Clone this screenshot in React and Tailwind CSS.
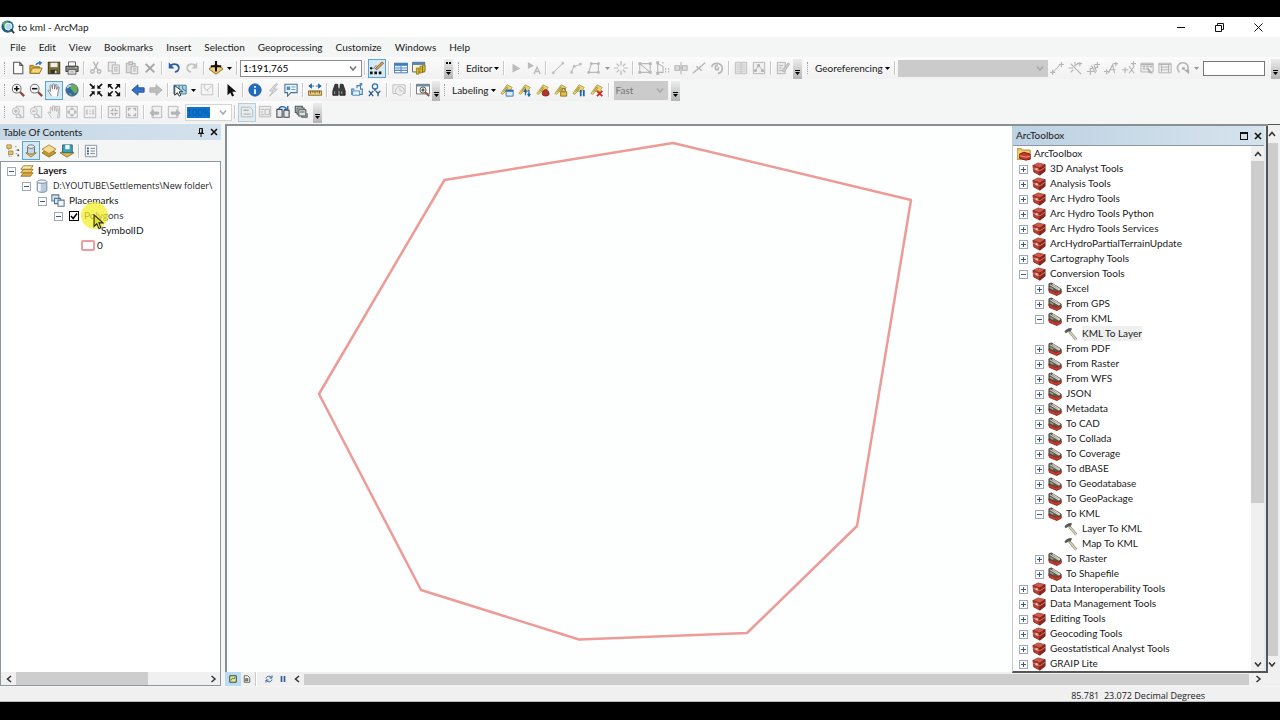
import React, { useState } from 'react';
import clsx from 'clsx';

const menus = ['File', 'Edit', 'View', 'Bookmarks', 'Insert', 'Selection', 'Geoprocessing', 'Customize', 'Windows', 'Help'];

const tools = [
  { name: '3D Analyst Tools', level: 1 },
  { name: 'Analysis Tools', level: 1 },
  { name: 'Arc Hydro Tools', level: 1 },
  { name: 'Arc Hydro Tools Python', level: 1 },
  { name: 'Arc Hydro Tools Services', level: 1 },
  { name: 'ArcHydroPartialTerrainUpdate', level: 1 },
  { name: 'Cartography Tools', level: 1 },
  { name: 'Conversion Tools', level: 1, open: true },
  { name: 'Excel', level: 2 },
  { name: 'From GPS', level: 2 },
  { name: 'From KML', level: 2, open: true },
  { name: 'KML To Layer', level: 3 },
  { name: 'From PDF', level: 2 },
  { name: 'From Raster', level: 2 },
  { name: 'From WFS', level: 2 },
  { name: 'JSON', level: 2 },
  { name: 'Metadata', level: 2 },
  { name: 'To CAD', level: 2 },
  { name: 'To Collada', level: 2 },
  { name: 'To Coverage', level: 2 },
  { name: 'To dBASE', level: 2 },
  { name: 'To Geodatabase', level: 2 },
  { name: 'To GeoPackage', level: 2 },
  { name: 'To KML', level: 2, open: true },
  { name: 'Layer To KML', level: 3 },
  { name: 'Map To KML', level: 3 },
  { name: 'To Raster', level: 2 },
  { name: 'To Shapefile', level: 2 },
  { name: 'Data Interoperability Tools', level: 1 },
  { name: 'Data Management Tools', level: 1 },
  { name: 'Editing Tools', level: 1 },
  { name: 'Geocoding Tools', level: 1 },
  { name: 'Geostatistical Analyst Tools', level: 1 },
  { name: 'GRAIP Lite', level: 1 },
];

// shared parts of the label icons
const tag = (
  <>
    <path d="M1 12L8 2l6 3-4 6-3-2-4 4z" fill="#e9d46a" stroke="#a8923a" strokeWidth=".8" />
    <path d="M4 10l4-6M6 10l3-5" stroke="#8a7a3c" strokeWidth=".8" />
  </>
);
const hand = 'M5 15C4 12 2 10.500 1 8.500c1-1 2 0 3 1.200L3.500 3c.8-1 1.700-.5 2 .4L6.300 7 6.500 1.500c1-.9 1.800-.3 2 .6L8.700 7l1-5c1-.6 1.800 0 1.700 1L11 7.500l1.500-3c1.200-.3 1.500.4 1.300 1.200L12.500 11 12 15';

const icons = {
  new: <path d="M3 1.500h7l3.500 3.500v9.500H3zM10 1.500V5h3.500" fill="#fff" stroke="#555" strokeWidth="1.200" />,
  open: (
    <>
      <path d="M1 14V5h4l1 1.500h6V14z" fill="#d9a52e" stroke="#8d6b1f" />
      <path d="M1 14l3-6h11l-3 6z" fill="#f7d774" stroke="#8d6b1f" />
      <path d="M8 4.500c1-2.500 3-2.500 4.500-2.500M11.500.5L14 2l-2 2.500" fill="none" stroke="#2b78c5" strokeWidth="1.500" />
    </>
  ),
  save: (
    <>
      <path d="M1.500 1.500h13v13h-13z" fill="#7a7030" stroke="#3f3a18" strokeWidth="1.200" />
      <path d="M4 2h8v5H4z" fill="#eee" />
      <path d="M4 10h8v4.500H4z" fill="#333" />
      <path d="M9 11h2v3H9z" fill="#ddd" />
    </>
  ),
  print: (
    <>
      <path d="M4 1h8v5H4z" fill="#fff" stroke="#555" />
      <path d="M1 6h14v6H1z" fill="#888" stroke="#333" />
      <path d="M3.500 10h9v5h-9z" fill="#fff" stroke="#444" />
      <path d="M5 12.500h6" stroke="#777" />
      <path d="M11.500 7.500h2" stroke="#dfe36a" />
    </>
  ),
  cut: (
    <g fill="none" stroke="#b4b4b4" strokeWidth="1.500">
      <path d="M5 1l5 9M10.500 1L6 10" />
      <circle cx="4" cy="12" r="2" />
      <circle cx="11.500" cy="12" r="2" />
    </g>
  ),
  copy: (
    <g fill="#eee" stroke="#b4b4b4" strokeWidth="1.200">
      <path d="M1.500 1.500h8v10h-8z" />
      <path d="M6 4.500h8v10H6z" />
      <path d="M8 7.500h4M8 9.500h4M8 11.500h4" />
    </g>
  ),
  paste: (
    <g fill="#ddd" stroke="#b4b4b4" strokeWidth="1.200">
      <path d="M1.500 2.500h10v11h-10z" />
      <path d="M4.500 1h4v3h-4z" />
      <path d="M7 6.500h7.500v8H7z" fill="#f2f2f2" />
      <path d="M9 9h4M9 11.500h4" />
    </g>
  ),
  del: <path d="M3 3.500l10 9.500M13 3.500L3 13" stroke="#a6a6a6" strokeWidth="2.200" />,
  undo: (
    <>
      <path d="M4 5c6-3.500 10 0 9.500 3.500C13 11 11 12.500 9 12.500" fill="none" stroke="#2d5fa8" strokeWidth="2" />
      <path d="M2 1.500v7h6.500z" fill="#2d5fa8" />
    </>
  ),
  redo: (
    <>
      <path d="M12 5C6 1.500 2 5 2.500 8.500 3 11 5 12.500 7 12.500" fill="none" stroke="#c4c4c4" strokeWidth="2" />
      <path d="M14 1.500v7H7.500z" fill="#c4c4c4" />
    </>
  ),
  add: (
    <>
      <path d="M0 9l8-5.500L16 9l-8 6z" fill="#f0d27c" stroke="#a57b2a" strokeWidth="1.200" />
      <path d="M8 0v12M2 6h12" stroke="#111" strokeWidth="2.400" />
    </>
  ),
  sketch: (
    <>
      <path d="M1 9l4-1 2-3 3 3" fill="none" stroke="#777" />
      <path d="M6 9l7.500-8 2 1.500L8 10z" fill="#e3a04c" stroke="#6d4a1d" strokeWidth=".8" />
      <path d="M0 12h3v3H0zM5 12h3v3H5zM10 12h3v3h-3zM0 7h2.500v2.500H0z" fill="#111" />
    </>
  ),
  table: (
    <>
      <path d="M.5 2.500h15v11H.5z" fill="#fff" stroke="#3c6799" />
      <path d="M.5 2.500h15v3H.5z" fill="#3d7cc0" />
      <path d="M1 8h14M1 10.700h14M8 5v8" stroke="#4f88c4" strokeWidth="1.200" />
      <path d="M2 6.500h5v3H2z" fill="#8fc3ea" />
    </>
  ),
  catalog: (
    <>
      <path d="M.5 1.500h14v11H.5z" fill="#f8f4d4" stroke="#555" />
      <path d="M.5 1.500h14v3H.5z" fill="#5584b8" />
      <path d="M5 15V8h3v7zM9 14V6h3v7zM12 13V5h3v6z" fill="#d8b91f" stroke="#80701a" strokeWidth=".8" />
    </>
  ),
  play: <path d="M4 3l9 5.500L4 13z" fill="#bbb" />,
  playA: (
    <>
      <path d="M1 1l7 4.500L1 9z" fill="#bbb" />
      <path d="M8 15l3.500-8L15 15M9.500 12h4" fill="none" stroke="#bbb" strokeWidth="1.500" />
    </>
  ),
  line: (
    <g stroke="#c0c0c0" fill="#c0c0c0">
      <path d="M2 14L14 2" strokeWidth="1.200" />
      <path d="M1.500 12.500h2v2h-2zM12.500 1.500h2v2h-2z" />
    </g>
  ),
  arc: (
    <g stroke="#c0c0c0">
      <path d="M3 14c0-6 3-9 10-10" fill="none" strokeWidth="1.200" />
      <path d="M2 12h2v2H2zM5 5h2v2H5zM12 2.500h2v2h-2z" fill="#c0c0c0" />
    </g>
  ),
  trace: (
    <g stroke="#b8b8b8" fill="#b8b8b8">
      <path d="M2 13L5 3h8v10H2" fill="none" strokeWidth="1.200" />
      <path d="M4 2h2v2H4zM12 2h2v2h-2zM12 12h2v2h-2zM1 12h2v2H1z" />
    </g>
  ),
  burst: <path d="M8 0v5M8 11v5M0 8h5M11 8h5M3 3l3 3M10 10l3 3M13 3l-3 3M6 10l-3 3" stroke="#bbb" strokeWidth="1.400" />,
  reshape: (
    <g stroke="#b8b8b8" fill="none" strokeWidth="1.200">
      <path d="M2 13V3l12 10zM2 3h12v10" />
      <path d="M1 2h2v2H1zM13 2h2v2h-2zM1 12h2v2H1zM13 12h2v2h-2z" fill="#b8b8b8" />
    </g>
  ),
  cutpoly: (
    <g stroke="#b4b4b4" fill="none" strokeWidth="1.200">
      <path d="M2 2v12M2 3l6 3v7H2" />
      <path d="M11 8v6M14.500 8v6M8 1v3" strokeDasharray="2 1" />
      <path d="M1 1h2v2H1zM1 13h2v2H1z" fill="#b4b4b4" />
    </g>
  ),
  split: (
    <g stroke="#b4b4b4" strokeWidth="1.200">
      <path d="M1 5.500h5.500v5H1zM9.500 5.500H15v5H9.500z" fill="#ddd" />
      <path d="M6 8h4M8 1v14" />
    </g>
  ),
  slice: <path d="M1 14L15 2M5 6l6 5" stroke="#b4b4b4" strokeWidth="1.500" />,
  rotate: <path d="M2 7c1-6 11-6 12 1 0 4-2 6-5 6M9 5c-4 0-4 6 0 5l1-3" fill="none" stroke="#b8b8b8" strokeWidth="2" />,
  attrs: (
    <g stroke="#bcbcbc" fill="#e2e2e2">
      <path d="M1.500 1.500h13v13h-13z" />
      <path d="M3 4.500h4M3 7h4M3 9.500h4M3 12h4M9 4.500h4M9 7h4M9 9.500h4M9 12h4" stroke="#cfcfcf" />
      <path d="M8 2v12" />
    </g>
  ),
  sketchProps: (
    <g stroke="#b0b0b0" fill="#efefef">
      <path d="M1.500 1.500h13v13h-13z" />
      <path d="M4 11l3.500-6 4.500 6" fill="none" />
      <path d="M3 10h2v2H3zM6.500 4h2v2h-2zM11 10h2v2h-2z" fill="#b0b0b0" />
    </g>
  ),
  create: (
    <g stroke="#b0b0b0" fill="#eaeaea">
      <path d="M1.500 1.500h9v13h-9z" />
      <path d="M3 5h5M3 8h4M3 11h5" />
      <path d="M7 11l7-9 1.500 1.500-6 9z" fill="#ccc" />
    </g>
  ),
  linkPts: <path d="M2 14L14 2M0 13h6M3 10v6M10 4h6M13 1v6" stroke="#b8b8b8" strokeWidth="1.200" />,
  autoReg: <path d="M5 5l10 10M8 1v5M1 8h5M3 3l3 3M12 2L9 5M3 13l3-3M11 3h5M13.500 1v5" stroke="#b4b4b4" strokeWidth="1.300" />,
  linkHash: <path d="M1 12h8M5 8v8M6 5l5 9M4 9l10-2M9 4l3 8M10 4h6M13 1v6" stroke="#b4b4b4" strokeWidth="1.300" fill="none" />,
  linkA: <path d="M0 12h6M3 9v6M5 14l5-10 2 10M6 10h7M11 3h5M13.500 1v5" stroke="#b4b4b4" strokeWidth="1.300" fill="none" />,
  linkX: <path d="M0 10h7M3.500 7v7M8 6l6 8M14 6l-6 8M10 3h6M13 0v6" stroke="#b4b4b4" strokeWidth="1.300" fill="none" />,
  linkTable: (
    <g stroke="#b0b0b0" fill="#eee">
      <path d="M1 2.500h14v10H1z" />
      <path d="M1 4h14M3 6.500h3M7 6.500h3M11 6.500h3M3 9h3M7 9h2" strokeWidth="1.500" />
      <path d="M9 8l5 6-4-1z" fill="#b0b0b0" />
    </g>
  ),
  linkGrid: (
    <g stroke="#b0b0b0" fill="#eee">
      <path d="M1 2.500h14v11H1z" />
      <path d="M1 4h14M4 4v9M12 4v9M3 7h10M3 10h10" />
    </g>
  ),
  spin: (
    <>
      <path d="M4 13C-1 8 3 1.500 8 2c5 0 7 5 5 9" fill="none" stroke="#b4b4b4" strokeWidth="1.800" />
      <path d="M7 7h3v3H7zM9 10h6v5z" fill="#aaa" />
    </>
  ),
  zoomIn: (
    <>
      <path d="M10 10l5 5" stroke="#8a4a3c" strokeWidth="2.600" />
      <circle cx="6.500" cy="6.500" r="5" fill="#f4f8fb" stroke="#777" strokeWidth="1.200" />
      <path d="M3.500 6.500h6M6.500 3.500v6" stroke="#111" strokeWidth="1.800" />
    </>
  ),
  zoomOut: (
    <>
      <path d="M10 10l5 5" stroke="#8a4a3c" strokeWidth="2.600" />
      <circle cx="6.500" cy="6.500" r="5" fill="#f4f8fb" stroke="#777" strokeWidth="1.200" />
      <path d="M3.500 6.500h6" stroke="#111" strokeWidth="1.800" />
    </>
  ),
  pan: <path d={hand} fill="#fff" stroke="#777" strokeWidth="1" />,
  globe: (
    <>
      <circle cx="8" cy="8" r="7" fill="#2f68ad" stroke="#4f6880" />
      <path d="M7 2c3-1 6 1 7 3v5l-3 2-3-4-2-2zM4 11l3 1 1 2H6z" fill="#6fae4c" />
      <path d="M3 6c0-2 2-3 4-3" fill="none" stroke="#a9d5ee" strokeWidth="1.800" />
    </>
  ),
  zoomFixedIn: (
    <>
      <path d="M1 1l4 4M15 1l-4 4M1 15l4-4M15 15l-4-4" stroke="#111" strokeWidth="1.700" />
      <path d="M6.500 2v4.500H2zM9.500 2v4.500H14zM6.500 14V9.500H2zM9.500 14V9.500H14z" fill="#111" />
    </>
  ),
  zoomFixedOut: (
    <>
      <path d="M3 3l3.500 3.500M13 3L9.500 6.500M3 13l3.500-3.500M13 13L9.500 9.500" stroke="#111" strokeWidth="1.700" />
      <path d="M1 6V1h5zM15 6V1h-5zM1 10v5h5zM15 10v5h-5z" fill="#111" />
    </>
  ),
  back: <path d="M1 8l7-6v3.500h7v5H8V14z" fill="#3272c8" stroke="#1e4d92" />,
  forward: <path d="M15 8L8 2v3.500H1v5h7V14z" fill="#bdbdbd" stroke="#adadad" />,
  select: (
    <>
      <path d="M1 2.500h14v10H1z" fill="#a5dcec" stroke="#3d6d88" />
      <path d="M7 3v9M11 3v4l4 2" stroke="#3d6d88" fill="none" />
      <path d="M2 3v11l3-3 2 4 2-1-2-4h4z" fill="#fff" stroke="#222" />
    </>
  ),
  clear: (
    <g stroke="#c0c0c0" fill="#f4f4f4">
      <path d="M1.500 1.500h13v12h-13z" />
      <path d="M5 2v4l5 4M14 3l-6 5" />
    </g>
  ),
  arrow: <path d="M4 1v13l3.200-3 2 4.500 2.300-1-2-4.500H14z" fill="#111" />,
  info: (
    <>
      <circle cx="8" cy="8" r="7" fill="#1f6dc0" stroke="#184f8c" />
      <path d="M7 7h2v5.500H7zM7 3.500h2v2H7z" fill="#fff" />
    </>
  ),
  bolt: <path d="M11 1L4 9h4l-4 6 9-8H9l4-6z" fill="#ddd" stroke="#b8b8b8" />,
  popup: (
    <>
      <path d="M1 1.500h14v9.500H8L4 15v-4H1z" fill="#eef6fb" stroke="#4b6f8f" strokeWidth="1.200" />
      <path d="M3 4h4v4H3z" fill="#4f8fc4" />
      <path d="M8.500 4.500H13M8.500 7.500H13" stroke="#4f8fc4" />
    </>
  ),
  measure: (
    <>
      <path d="M1 3.500h14M1 3.500l3-2.500v5zM15 3.500L12 1v5z" stroke="#2a6ab0" fill="#2a6ab0" />
      <path d="M7 1h2v5H7z" fill="#f5f5f5" />
      <path d="M.5 9h15v5H.5z" fill="#f0cf7a" stroke="#7d6228" />
      <path d="M3 9v3M5.500 9v2M8 9v3M10.500 9v2M13 9v3" stroke="#5a451a" />
    </>
  ),
  find: (
    <>
      <path d="M3.500 1.500h3l.5 6V14H1V9zM9.500 1.500h3L15 9v5H9V7.500z" fill="#3c3c3c" stroke="#222" />
      <path d="M6 6h4v3H6z" fill="#444" />
      <path d="M3 9.500v3M11 9.500v3" stroke="#aaa" />
    </>
  ),
  route: (
    <>
      <path d="M4 13H2V7h3M8 6V3h4v4h2v6H9" fill="none" stroke="#3e7fb6" strokeWidth="1.300" />
      <path d="M3 9h8v5H3z" fill="#e8f2f9" stroke="#3e7fb6" />
      <path d="M11 0h3v3h-3z" fill="#5c8aae" />
    </>
  ),
  xy: (
    <>
      <circle cx="8" cy="4" r="3" fill="none" stroke="#2f76b5" strokeWidth="1.500" />
      <path d="M8 6v3M1 9l5 6M6 9l-5 6M9 9l2.500 3L14 9M11.500 12v3" stroke="#2f5f94" strokeWidth="1.600" fill="none" />
    </>
  ),
  time: (
    <g stroke="#bcbcbc" fill="#eee">
      <path d="M1 2h14v10H1z" />
      <circle cx="9" cy="9" r="5" />
      <path d="M9 6v3h3" fill="none" />
    </g>
  ),
  viewer: (
    <>
      <path d="M.5 1.500h15v11H.5z" fill="#fff" stroke="#666" />
      <path d="M.5 1.500h15v2.500H.5z" fill="#6f8aa5" />
      <circle cx="8" cy="8" r="3.500" fill="#fff" stroke="#444" />
      <path d="M10.500 10.500L15 15" stroke="#8a4a3c" strokeWidth="2" />
      <path d="M6 8h4M8 6v4" stroke="#111" />
    </>
  ),
  labelMgr: (
    <>
      {tag}
      <path d="M7 8h8v7H7z" fill="#d9ecfb" stroke="#2a6bb0" />
      <path d="M7 8h8v2H7z" fill="#2a6bb0" />
    </>
  ),
  labelPri: (
    <>
      {tag}
      <path d="M8.500 14V8M7 10l1.500-2.500L10 10M12.500 8v6M11 12.500l1.500 2.500 1.500-2.500" fill="none" stroke="#1d62b5" strokeWidth="1.400" />
    </>
  ),
  labelWeight: (
    <>
      {tag}
      <path d="M8 9.500C9 7 13 7 14 9.500l1 3c0 3-8 3-8 0z" fill="#b3352a" stroke="#761d16" />
    </>
  ),
  labelLock: (
    <>
      {tag}
      <path d="M9 10V8c0-2.500 4-2.500 4 0v2" fill="none" stroke="#8c7532" strokeWidth="1.300" />
      <path d="M7.500 10h7v5h-7z" fill="#e6bb42" stroke="#8c6e1c" />
    </>
  ),
  labelPause: (
    <>
      {tag}
      <path d="M10 8v7M13.500 8v7" stroke="#1d62b5" strokeWidth="2" />
    </>
  ),
  labelUn: (
    <>
      {tag}
      <path d="M8 9l6 6M14 9l-6 6" stroke="#d22a20" strokeWidth="2.200" />
    </>
  ),
  pgZoomIn: (
    <g stroke="#b8b8b8" fill="#efefef">
      <path d="M6 1.500h8.500v13H6z" />
      <circle cx="5.500" cy="7" r="4" />
      <path d="M8.500 10l4 4M3.500 7h4M5.500 5v4" strokeWidth="1.400" />
    </g>
  ),
  pgZoomOut: (
    <g stroke="#b8b8b8" fill="#efefef">
      <path d="M6 1.500h8.500v13H6z" />
      <circle cx="5.500" cy="7" r="4" />
      <path d="M8.500 10l4 4M3.500 7h4" strokeWidth="1.400" />
    </g>
  ),
  pgPan: (
    <g stroke="#b8b8b8" fill="#efefef">
      <path d="M6 1.500h8.500v13H6z" />
      <path d={hand} />
    </g>
  ),
  pgFull: (
    <g stroke="#b4b4b4" fill="#f1f1f1">
      <path d="M2 1.500h12v13H2z" />
      <path d="M8 3L6 5h4zM8 13l-2-2h4zM3 8l2-2v4zM13 8l-2-2v4z" fill="#b4b4b4" />
    </g>
  ),
  pgOne: (
    <g stroke="#b4b4b4" fill="#f1f1f1">
      <path d="M1.500 1.500h13v13h-13z" />
      <path d="M4.500 5v6M11.500 5v6M8 6v1.500M8 9v1.500" strokeWidth="1.400" />
    </g>
  ),
  pgIn: (
    <g stroke="#b0b0b0" fill="#f1f1f1">
      <path d="M1.500 1.500h13v13h-13z" />
      <path d="M4 6.500h2.500V4M12 6.500H9.500V4M4 9.500h2.500V12M12 9.500H9.500V12" fill="none" strokeWidth="1.500" />
    </g>
  ),
  pgOut: (
    <g stroke="#b0b0b0" fill="#f1f1f1">
      <path d="M1.500 1.500h13v13h-13z" />
      <path d="M4 6.500V4h2.500M12 6.500V4H9.500M4 9.500V12h2.500M12 9.500V12H9.500" fill="none" strokeWidth="1.500" />
    </g>
  ),
  pgBack: (
    <g stroke="#b4b4b4" fill="#f1f1f1">
      <path d="M3.500 1.500h11v13h-11z" />
      <path d="M1 9l4-3.500V8h6v2.500H5V13z" fill="#b4b4b4" />
    </g>
  ),
  pgNext: (
    <g stroke="#b4b4b4" fill="#f1f1f1">
      <path d="M1.500 1.500h11v13h-11z" />
      <path d="M15 9l-4-3.500V8H5v2.500h6V13z" fill="#b4b4b4" />
    </g>
  ),
  draft: (
    <g stroke="#b4b4b4" fill="#e9eef0">
      <path d="M1.500 2.500h10l3 3v8h-13z" />
      <path d="M4 6h6M4 10.500h8" strokeWidth="1.500" />
    </g>
  ),
  focus: (
    <g stroke="#b4b4b4" fill="#eee">
      <path d="M1.500 1.500h13v12h-13z" />
      <path d="M3 5h4M3 8h3M3 11h4M8 5h5v6H8z" />
    </g>
  ),
  swap: (
    <>
      <path d="M1 5h6v9H1zM9 6h6v8H9z" fill="#dfe9ee" stroke="#444" strokeWidth="1.200" />
      <path d="M3 5c1-4 6-4 9-1M13.500 1v4h-4" fill="none" stroke="#2465a8" strokeWidth="1.600" />
    </>
  ),
  pages: (
    <g stroke="#4a5358" strokeWidth="1.200" fill="#dfe6e2">
      <path d="M1.500 1.500h8v7h-8z" />
      <path d="M3.500 3.500h8v7h-8z" />
      <path d="M5.500 5.500h8v7h-8z" />
      <path d="M7 8h5M9 12v2h6v-4h-1" fill="none" />
    </g>
  ),
  listDraw: (
    <>
      <path d="M1 1h5v4H1zM3 8h5v4H3z" fill="#e8c46b" stroke="#a98734" />
      <path d="M3 5v9h4M10 3h2M11 7h2M11 11h2" fill="none" stroke="#999" strokeDasharray="2 1" />
      <path d="M13 6h2v2h-2zM13 12h2v2h-2z" fill="#555" />
    </>
  ),
  listSource: (
    <>
      <path d="M2 10h12l-6 5z" fill="#ecc45e" stroke="#9d7828" />
      <path d="M4 3v7c0 2 8 2 8 0V3" fill="#c9d3de" stroke="#5d6b7c" />
      <ellipse cx="8" cy="3" rx="4" ry="2" fill="#eef2f6" stroke="#5d6b7c" />
    </>
  ),
  listVis: (
    <>
      <path d="M0 10l8-5 8 5-8 5z" fill="#c9962d" stroke="#8d6b25" />
      <path d="M0 6l8-5 8 5-8 5z" fill="#f5dc93" stroke="#a57f2d" />
    </>
  ),
  listSel: (
    <>
      <path d="M0 10l8-3 8 3-8 5z" fill="#e7b94d" stroke="#8d6b25" />
      <path d="M3 1h11v9H3z" fill="#39a2b8" stroke="#225e73" />
      <path d="M6 1h5v5H6z" fill="#e9f5f7" />
    </>
  ),
  options: (
    <>
      <path d="M1.500 1.500h13v13h-13z" fill="#f5f8fa" stroke="#7f8d99" />
      <path d="M3.500 4h2v2h-2zM3.500 7h2v2h-2zM3.500 10h2v2h-2z" fill="#40576b" />
      <path d="M7.500 5h5M7.500 8h5M7.500 11h5" stroke="#68788a" />
    </>
  ),
  layers: (
    <g stroke="#8f6a1e" strokeWidth=".9">
      <path d="M1 14l3-4h11l-3 4z" fill="#dfab3d" />
      <path d="M1 10l3-4h11l-3 4z" fill="#edc765" />
      <path d="M1 6l3-4h11l-3 4z" fill="#f9e7ad" />
    </g>
  ),
  database: (
    <>
      <path d="M2.500 3v10c0 3 11 3 11 0V3" fill="#b9cbe0" stroke="#6d7f95" />
      <path d="M5 5v9" stroke="#f5f9fc" strokeWidth="3" />
      <ellipse cx="8" cy="3" rx="5.500" ry="2" fill="#eef3f8" stroke="#6d7f95" />
    </>
  ),
  group: (
    <g stroke="#5a7690" fill="#dce6ee" strokeWidth="1.200">
      <path d="M1 1h8v7H1z" />
      <path d="M4 5h7v6H4z" />
      <path d="M8 7h7v7H8z" fill="#f3f7fa" />
    </g>
  ),
  toolboxRoot: (
    <>
      <path d="M0 14V2h5l1 1.500h9V14z" fill="#f0cf68" stroke="#a27d28" />
      <path d="M3 8l5-2 7 2v6l-5 1-7-2z" fill="#c13a2c" stroke="#6e1c15" />
      <path d="M3 10l7 1.500 5-1" stroke="#f0a79a" fill="none" />
    </>
  ),
  toolbox: (
    <>
      <path d="M1 4l6-3 8 2-6 4z" fill="#d4584a" stroke="#8a3026" strokeWidth=".8" />
      <path d="M1 4l8 3v8l-7-3.500z" fill="#bb3a2e" stroke="#7a2a20" strokeWidth=".8" />
      <path d="M9 7l6-4v7.500L9 15z" fill="#8f271e" stroke="#6b1912" strokeWidth=".8" />
      <path d="M1.500 7l7.500 3 6-4" fill="none" stroke="#e88f80" strokeWidth=".9" />
      <path d="M4 7h2.500v3L4 9z" fill="#f3cfc7" />
    </>
  ),
  toolset: (
    <>
      <path d="M1 2l3-1 11 7v4l-5 3-9-5z" fill="#5a5650" stroke="#3c3834" strokeWidth=".8" />
      <path d="M2 3l11 6.500M5 2.500l9 6" stroke="#d9d4c6" strokeWidth="1.300" />
      <path d="M1 8l8 4 6-2v3l-5 2.500L1.500 12z" fill="#c7392c" stroke="#7a2a20" strokeWidth=".8" />
      <path d="M2 6l4 2.500" stroke="#8fae88" strokeWidth="1.600" />
    </>
  ),
  hammer: (
    <>
      <path d="M6 5l8 9.500" stroke="#8b8872" strokeWidth="3" />
      <path d="M6 5l8 9.500" stroke="#dcd8c0" strokeWidth="1.600" />
      <path d="M.5 5.500C1.500 3 4 1 8.500 1l.5 1.500L7 5.500 5 5 2 7z" fill="#55575a" />
    </>
  ),
  dataView: (
    <>
      <path d="M1.500 1.500h13v13h-13z" fill="#e8e6a8" stroke="#3e4a2c" strokeWidth="2" />
      <path d="M4 11l3-5 3 2 2-4" fill="none" stroke="#4e8a4a" strokeWidth="2" />
    </>
  ),
  layoutView: (
    <>
      <path d="M2.500 1.500h7l4 4v9h-11z" fill="#fff" stroke="#444" strokeWidth="1.600" />
      <path d="M5 7h5v5H5z" fill="#7a9472" stroke="#444" />
    </>
  ),
  refresh: (
    <path d="M2 7c1-5 8-6 11-2M14 9c-1 5-8 6-11 2M14 1v5H9M2 15v-5h5" fill="none" stroke="#2f5f94" strokeWidth="2" />
  ),
  pause: <path d="M5 2v12M11 2v12" stroke="#2f5f94" strokeWidth="3.400" />,
};

function Icon({ name, className = 'size-3.5' }) {
  return (
    <svg viewBox="0 0 16 16" className={clsx('shrink-0', className)} aria-hidden="true">
      {icons[name]}
    </svg>
  );
}

function Chevron({ dir, className = 'size-2' }) {
  const d = { up: 'M1 6l3-3.500L7 6', down: 'M1 2.500L4 6l3-3.500', left: 'M6 1L2.500 4 6 7', right: 'M2.500 1L6 4 2.500 7' }[dir];
  return (
    <svg viewBox="0 0 8 8" className={clsx('shrink-0', className)} aria-hidden="true">
      <path d={d} fill="none" stroke="currentColor" strokeWidth="1.500" />
    </svg>
  );
}

function ToolButton({ name, active, dim }) {
  return (
    <button
      type="button"
      aria-label={name}
      className={clsx(
        'flex h-[19px] w-[18px] shrink-0 items-center justify-center',
        active && (dim ? 'border border-[#b9cdd9] bg-[#e3edf2]' : 'border border-[#5fa3d0] bg-[#d5e9f5]')
      )}
    >
      <Icon name={name} />
    </button>
  );
}

const Tools = ({ names }) => names.split(' ').map(n => <ToolButton key={n} name={n} />);

const Sep = () => <span className="mx-[2px] h-3.5 w-[2px] shrink-0 border-l border-[#c9c9c9] bg-white" />;

const Grip = () => <span className="mx-1 h-3 w-px shrink-0 border-l border-dotted border-[#a0a0a0]" />;

function DropArrow({ disabled }) {
  return (
    <button type="button" aria-label="More" className="flex h-4 w-[9px] shrink-0 items-center justify-center">
      <svg viewBox="0 0 5 3" className={clsx('h-[3px] w-[5px]', disabled ? 'fill-[#999]' : 'fill-black')}>
        <path d="M0 0h5L2.500 3z" />
      </svg>
    </button>
  );
}

function Overflow({ more }) {
  return (
    <button
      type="button"
      aria-label="Toolbar options"
      className="ml-auto flex h-5 w-[9px] shrink-0 flex-col items-center justify-end self-end bg-linear-to-b from-[#ededed] to-[#b4b4b4] pb-1"
    >
      {more && <span className="mb-1.5 h-[2px] w-[5px] border-x-2 border-black" />}
      <svg viewBox="0 0 5 5" className="size-[5px]">
        <path d="M0 0h5v1H0zM0 2h5L2.500 5z" />
      </svg>
    </button>
  );
}

function Toolbar({ className, children }) {
  return (
    <div role="toolbar" className={clsx('flex h-[22px] items-center bg-linear-to-b from-[#fbfbfb] to-[#f1f1f1]', className)}>
      {children}
    </div>
  );
}

function Combo({ label, value, disabled, className }) {
  return (
    <div
      className={clsx(
        'relative flex shrink-0 items-center text-[10px]',
        disabled ? 'bg-[#cbcbcb] text-[#777]' : 'border border-[#8c8c8c] bg-white text-black',
        className
      )}
    >
      <select aria-label={label} disabled={disabled} className="h-full w-full appearance-none pl-0.5 outline-none">
        <option>{value}</option>
      </select>
      <span className={clsx('pointer-events-none absolute right-1', disabled ? 'text-[#aaa]' : 'text-[#777]')}>
        <Chevron dir="down" />
      </span>
    </div>
  );
}

function Expander({ open }) {
  return (
    <button
      type="button"
      aria-label={open ? 'Collapse' : 'Expand'}
      className="mt-px flex size-[9px] shrink-0 items-center justify-center border border-[#a3a9b0] bg-white"
    >
      <svg viewBox="0 0 5 5" className="size-[5px]">
        <path d={open ? 'M0 2h5v1H0z' : 'M0 2h2V0h1v2h2v1H3v2H2V3H0z'} fill="#3d5a8c" />
      </svg>
    </button>
  );
}

function ScrollButton({ dir, className }) {
  return (
    <button type="button" aria-label={`Scroll ${dir}`} className={clsx('flex shrink-0 items-center justify-center text-[#333]', className)}>
      <Chevron dir={dir} />
    </button>
  );
}

function TitleBar() {
  return (
    <header className="flex h-5 shrink-0 items-center bg-white">
      <svg viewBox="0 0 16 16" className="ml-px size-3.5">
        <circle cx="7.500" cy="7.500" r="7" fill="#1f5f86" />
        <path d="M2 4c2-3 5-3 7-2L7 5 4 9z" fill="#5fa86a" />
        <circle cx="8.500" cy="7.500" r="3.800" fill="#a8dcec" stroke="#e8f3f6" strokeWidth="1.200" />
        <path d="M11 10.500l4 4.500" stroke="#333" strokeWidth="2" />
      </svg>
      <h1 className="ml-[3px] text-[10px]">to kml - ArcMap</h1>
      <div className="ml-auto flex pr-0.5">
        <button type="button" aria-label="Minimize" className="flex h-5 w-[39px] items-center justify-center">
          <span className="h-px w-2 bg-black" />
        </button>
        <button type="button" aria-label="Restore" className="flex h-5 w-[39px] items-center justify-center">
          <svg viewBox="0 0 9 9" className="size-[9px]" fill="none" stroke="#111">
            <path d="M.5 2.500h6v6h-6zM2.500 2.500v-2h6v6h-2" />
          </svg>
        </button>
        <button type="button" aria-label="Close" className="flex h-5 w-[39px] items-center justify-center">
          <svg viewBox="0 0 9 9" className="size-[9px]" fill="none" stroke="#111">
            <path d="M.5.5l8 8M8.500.5l-8 8" />
          </svg>
        </button>
      </div>
    </header>
  );
}

function Toolbars() {
  return (
    <div className="flex h-[67px] shrink-0 flex-col">
      <div className="flex">
        <Toolbar className="w-[453px]">
          <Grip />
          <Tools names="new open save print" />
          <Sep />
          <Tools names="cut copy paste del" />
          <Sep />
          <Tools names="undo redo" />
          <Sep />
          <ToolButton name="add" />
          <DropArrow />
          <Sep />
          <Combo label="Map scale" value="1:191,765" className="h-[17px] w-[122px]" />
          <Sep />
          <ToolButton name="sketch" active />
          <Sep />
          <Tools names="table catalog" />
          <Overflow more />
        </Toolbar>
        <Toolbar className="ml-px w-[348px]">
          <Grip />
          <button type="button" className="ml-[3px] text-[10px]">Editor</button>
          <DropArrow />
          <Sep />
          <Tools names="play playA" />
          <Sep />
          <Tools names="line arc trace" />
          <DropArrow disabled />
          <ToolButton name="burst" />
          <Sep />
          <Tools names="reshape cutpoly split slice rotate" />
          <Sep />
          <Tools names="attrs sketchProps" />
          <Sep />
          <ToolButton name="create" />
          <Overflow />
        </Toolbar>
        <Toolbar className="ml-px flex-1">
          <Grip />
          <button type="button" className="ml-[3px] text-[10px]">Georeferencing</button>
          <DropArrow />
          <Sep />
          <Combo label="Georeferencing layer" value="" disabled className="h-[17px] w-[150px]" />
          <Tools names="linkPts autoReg linkHash linkA linkX linkTable linkGrid spin" />
          <DropArrow disabled />
          <input aria-label="Rotation" className="ml-0.5 h-[15px] w-[62px] border border-[#777] bg-white px-1 text-[10px] outline-none" />
          <Overflow />
        </Toolbar>
      </div>
      <div className="flex">
        <Toolbar className="w-[440px]">
          <Grip />
          <Tools names="zoomIn zoomOut" />
          <ToolButton name="pan" active />
          <ToolButton name="globe" />
          <Sep />
          <Tools names="zoomFixedIn zoomFixedOut" />
          <Sep />
          <Tools names="back forward" />
          <Sep />
          <ToolButton name="select" />
          <DropArrow />
          <ToolButton name="clear" />
          <Sep />
          <ToolButton name="arrow" />
          <Sep />
          <Tools names="info bolt popup" />
          <Sep />
          <ToolButton name="measure" />
          <Sep />
          <Tools names="find route xy" />
          <Sep />
          <ToolButton name="time" />
          <Sep />
          <ToolButton name="viewer" />
          <Overflow />
        </Toolbar>
        <Toolbar className="w-[240px]">
          <Grip />
          <button type="button" className="ml-[3px] text-[10px]">Labeling</button>
          <DropArrow />
          <Tools names="labelMgr labelPri labelWeight labelLock labelPause labelUn" />
          <Sep />
          <Combo label="Label quality" value="Fast" disabled className="ml-0.5 h-[19px] w-[54px]" />
          <Overflow />
        </Toolbar>
      </div>
      <div className="flex">
        <Toolbar className="w-[322px]">
          <Grip />
          <Tools names="pgZoomIn pgZoomOut pgPan pgFull pgOne" />
          <Sep />
          <Tools names="pgIn pgOut" />
          <Sep />
          <Tools names="pgBack pgNext" />
          <div className="ml-0.5 flex h-[17px] w-[47px] items-center border border-[#d5d5d5] bg-white">
            <input
              aria-label="Page zoom"
              defaultValue="100%"
              className="ml-px h-[11px] w-[23px] bg-[#0c74cf] text-[9px] leading-none text-[#0a5aa6] outline-none"
            />
            <button type="button" aria-label="Zoom levels" className="ml-auto mr-1 text-[#aaa]">
              <Chevron dir="down" />
            </button>
          </div>
          <Sep />
          <ToolButton name="draft" active dim />
          <Tools names="focus swap pages" />
          <Overflow />
        </Toolbar>
      </div>
    </div>
  );
}

function Contents() {
  const [visible, setVisible] = useState(true);

  return (
    <aside className="flex w-[221px] shrink-0 flex-col">
      <div className="flex h-4 shrink-0 items-center bg-linear-to-r from-[#c6d8e6] to-[#d3e1ec] pl-[3px]">
        <h2 className="text-[10px]">Table Of Contents</h2>
        <button type="button" aria-label="Auto hide" className="ml-auto">
          <svg viewBox="0 0 8 9" className="h-[9px] w-2" fill="none" stroke="#111">
            <path d="M2.500.5h3v4.500h-3zM1 5.500h6M4 6v3M5 1v4" />
          </svg>
        </button>
        <button type="button" aria-label="Close contents" className="mr-[3px] ml-[5px]">
          <svg viewBox="0 0 8 8" className="size-2" stroke="#111" strokeWidth="1.600">
            <path d="M1 1l6 6M7 1L1 7" />
          </svg>
        </button>
      </div>
      <div className="flex h-[21px] shrink-0 items-center pl-1">
        <ToolButton name="listDraw" />
        <ToolButton name="listSource" active />
        <Tools names="listVis listSel" />
        <Sep />
        <ToolButton name="options" />
      </div>
      <div className="flex min-h-0 flex-1 flex-col border border-[#8f979e] bg-white">
        <ul className="min-h-0 flex-1 overflow-hidden pt-px text-[10px] leading-[15px] whitespace-nowrap">
          <li className="flex h-[15px] items-center gap-1 pl-1.5">
            <Expander open />
            <Icon name="layers" />
            <span className="font-bold">Layers</span>
          </li>
          <li className="flex h-[15px] items-center gap-1 pl-[21px]">
            <Expander open />
            <Icon name="database" />
            <span className="font-['Open_Sans',sans-serif] text-[9px]">D:\YOUTUBE\Settlements\New folder\</span>
          </li>
          <li className="flex h-[15px] items-center gap-1 pl-[37px]">
            <Expander open />
            <Icon name="group" />
            <span>Placemarks</span>
          </li>
          <li className="relative flex h-[15px] items-center pl-[53px]">
            <Expander open />
            <label className="ml-1.5 flex items-center gap-[5px] text-[#444]">
              <span className="relative flex size-2.5">
                <input
                  type="checkbox"
                  checked={visible}
                  onChange={() => setVisible(v => !v)}
                  className="peer size-2.5 appearance-none border border-black bg-white"
                />
                <svg viewBox="0 0 10 10" className="pointer-events-none absolute inset-0 hidden peer-checked:block">
                  <path d="M2 5l2.200 2.500L8 2.500" fill="none" stroke="#000" strokeWidth="1.500" />
                </svg>
              </span>
              Polygons
            </label>
            {/* click highlight and mouse pointer */}
            <span className="pointer-events-none absolute -top-1.5 left-20 size-[27px] rounded-full bg-[#f2ee1e]/70" />
            <svg viewBox="0 0 12 18" className="pointer-events-none absolute top-1.5 left-[92px] h-4 w-[11px]">
              <path d="M1 1v13l3-3 2.500 5.500 2.300-1L6.500 10H11z" fill="#dfe22c" stroke="#222" strokeWidth="1.200" />
            </svg>
          </li>
          <li className="flex h-[15px] items-center pl-[100px]">SymbolID</li>
          <li className="flex h-[15px] items-center gap-0.5 pl-20">
            <span className="h-[11px] w-3.5 rounded-xs border-2 border-[#ee9c9c] bg-white" />
            <span>0</span>
          </li>
        </ul>
        <div className="flex h-[13px] shrink-0 bg-[#f0f0f0]">
          <ScrollButton dir="left" className="w-[15px]" />
          <div className="flex flex-1">
            <div className="w-[70%] bg-[#cdcdcd]" />
          </div>
          <ScrollButton dir="right" className="w-[15px]" />
        </div>
      </div>
    </aside>
  );
}

function Toolbox() {
  return (
    <section className="absolute top-0.5 right-3 bottom-[13px] flex w-[256px] flex-col border-r-2 border-b-2 border-l border-r-[#555] border-b-[#555] border-l-[#c4ccd2] bg-[#e3e8ec] pr-0.5">
      <div className="flex h-[19px] shrink-0 items-center bg-linear-to-r from-[#bdd2e3] to-[#d6e3ed] pl-[3px]">
        <h2 className="text-[10px]">ArcToolbox</h2>
        <button type="button" aria-label="Maximize" className="ml-auto size-2 border border-t-2 border-[#111]" />
        <button type="button" aria-label="Close toolbox" className="mr-0.5 ml-1.5">
          <svg viewBox="0 0 8 8" className="size-2" stroke="#111" strokeWidth="1.600">
            <path d="M1 1l6 6M7 1L1 7" />
          </svg>
        </button>
      </div>
      <div className="flex min-h-0 flex-1 border-t border-[#8f979e] bg-white">
        <ul className="min-w-0 flex-1 overflow-hidden text-[10px] leading-[15px] whitespace-nowrap">
          <li className="flex h-[15px] items-center gap-[3px] pl-1">
            <Icon name="toolboxRoot" />
            <span>ArcToolbox</span>
          </li>
          {tools.map(tool => (
            <li
              key={tool.name}
              className={clsx('flex h-[15px] items-center gap-1', {
                'pl-1.5': tool.level === 1,
                'pl-[22px]': tool.level === 2,
                'pl-[51px]': tool.level === 3,
              })}
            >
              {tool.level < 3 && <Expander open={tool.open} />}
              <Icon name={['toolbox', 'toolset', 'hammer'][tool.level - 1]} />
              <span className={clsx(tool.name === 'KML To Layer' && 'bg-[#efefef]')}>{tool.name}</span>
            </li>
          ))}
        </ul>
        <div className="flex w-[13px] shrink-0 flex-col bg-[#f0f0f0]">
          <ScrollButton dir="up" className="h-[15px]" />
          <div className="flex-1">
            <div className="h-[69%] bg-[#cdcdcd]" />
          </div>
          <ScrollButton dir="down" className="h-[15px]" />
        </div>
      </div>
    </section>
  );
}

function MapView() {
  return (
    <main className="relative ml-1 flex min-w-0 flex-1 flex-col">
      <div className="flex min-h-0 flex-1">
        <div className="min-w-0 flex-1 overflow-hidden border-t-2 border-l-2 border-[#8a8f93] bg-[#fcfffe]">
          <svg width="1040" height="546" viewBox="227 126 1040 546">
            <path
              d="M444.500 180L673 143l238 57-54 326-110 107-168 6.500L421 590 319 394z"
              fill="none"
              stroke="#ee9a96"
              strokeWidth="2.500"
              strokeLinejoin="round"
            />
          </svg>
        </div>
        <div className="flex w-3 shrink-0 flex-col border-t border-[#555] bg-[#f0f0f0] pr-1">
          <ScrollButton dir="up" className="h-[18px]" />
          <div className="-mr-0.5 flex-1 bg-[#cdcdcd]" />
          <ScrollButton dir="down" className="h-4" />
        </div>
      </div>
      <div className="flex h-3.5 shrink-0 items-center bg-[#f0f0f0] pr-3.5">
        <button type="button" aria-label="Data view" className="flex h-3.5 w-4 items-center justify-center bg-[#b9dcf0]">
          <Icon name="dataView" className="size-2" />
        </button>
        <button type="button" aria-label="Layout view" className="flex w-3 items-center justify-center">
          <Icon name="layoutView" className="size-2" />
        </button>
        <Sep />
        <button type="button" aria-label="Refresh" className="ml-0.5 flex w-4 items-center justify-center">
          <Icon name="refresh" className="size-2" />
        </button>
        <button type="button" aria-label="Pause drawing" className="flex w-3 items-center justify-center">
          <Icon name="pause" className="size-2" />
        </button>
        <ScrollButton dir="left" className="h-3 w-[15px]" />
        <div className="h-[11px] flex-1 bg-[#cdcdcd]" />
        <ScrollButton dir="right" className="h-3 w-[17px]" />
      </div>
      <Toolbox />
    </main>
  );
}

export default function App() {
  return (
    <div className="flex h-screen flex-col bg-black pt-[17px] pb-[18px] font-['Lato','Open_Sans',sans-serif] text-[10px] text-[#1a1a1a]">
      <TitleBar />
      <div className="flex min-h-0 flex-1 flex-col bg-[#f4f5f5]">
        <nav className="flex h-5 shrink-0 items-center gap-[13px] pl-2.5">
          {menus.map(item => (
            <button key={item} type="button">{item}</button>
          ))}
        </nav>
        <Toolbars />
        <div className="flex min-h-0 flex-1">
          <Contents />
          <MapView />
        </div>
        <footer className="mt-px flex h-[15px] shrink-0 items-end justify-end border-b border-[#bbb] bg-[#f0f0f0] pr-[75px] font-['Open_Sans',sans-serif] text-[9px] leading-[11px] whitespace-pre">
          85.781  23.072 Decimal Degrees
        </footer>
      </div>
    </div>
  );
}
